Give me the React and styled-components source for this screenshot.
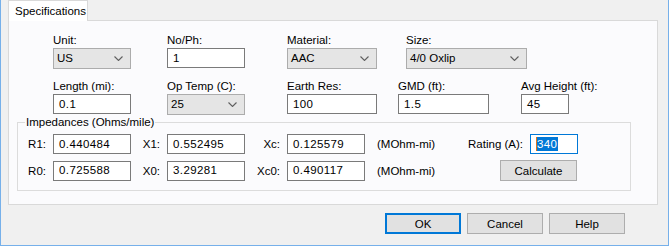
import React from "react";
import styled, { createGlobalStyle } from "styled-components";

const GlobalStyle = createGlobalStyle`
  html, body {
    margin: 0;
    padding: 0;
    background: #f0f0f0;
  }
  body {
    font-family: "Liberation Sans", "Noto Sans", sans-serif;
    font-size: 11.5px;
    color: #000;
  }
`;

const Chevron = () => (
  <svg width="9" height="5" viewBox="0 0 9 5">
    <path d="M0.5 0.5 L4.5 4.5 L8.5 0.5" fill="none" stroke="#5f5f5f" strokeWidth="1.1" />
  </svg>
);

const Select = ({ value, width }) => (
  <Combo $w={width}>
    <span>{value}</span>
    <Chevron />
  </Combo>
);

const Field = ({ label, children }) => (
  <FieldWrap>
    <Label>{label}</Label>
    {children}
  </FieldWrap>
);

const App = () => {
  return (
    <>
      <GlobalStyle />
      <Window>
        <TabStrip>
          <Tab>Specifications</Tab>
        </TabStrip>
        <Panel>
          <Row $cols="114px 120px 119px 1fr">
            <Field label="Unit:">
              <Select value="US" width={78} />
            </Field>
            <Field label="No/Ph:">
              <TextBox $w={78}>1</TextBox>
            </Field>
            <Field label="Material:">
              <Select value="AAC" width={90} />
            </Field>
            <Field label="Size:">
              <Select value="4/0 Oxlip" width={121} />
            </Field>
          </Row>
          <Row $cols="114px 120px 111px 123px 1fr">
            <Field label="Length (mi):">
              <TextBox $w={78}>0.1</TextBox>
            </Field>
            <Field label="Op Temp (C):">
              <Select value="25" width={78} />
            </Field>
            <Field label="Earth Res:">
              <TextBox $w={90}>100</TextBox>
            </Field>
            <Field label="GMD (ft):">
              <TextBox $w={91}>1.5</TextBox>
            </Field>
            <Field label="Avg Height (ft):">
              <TextBox $w={48}>45</TextBox>
            </Field>
          </Row>
          <Group>
            <Legend>Impedances (Ohms/mile)</Legend>
            <ImpGrid>
              <RowLabel>R1:</RowLabel>
              <TextBox $w={78}>0.440484</TextBox>
              <RowLabel>X1:</RowLabel>
              <TextBox $w={78}>0.552495</TextBox>
              <RowLabel>Xc:</RowLabel>
              <TextBox $w={78}>0.125579</TextBox>
              <Unit>(MOhm-mi)</Unit>
              <RowLabel>Rating (A):</RowLabel>
              <TextBox $w={48} $focus>
                <Caret />
                <Selected>340</Selected>
              </TextBox>

              <RowLabel>R0:</RowLabel>
              <TextBox $w={78}>0.725588</TextBox>
              <RowLabel>X0:</RowLabel>
              <TextBox $w={78}>3.29281</TextBox>
              <RowLabel>Xc0:</RowLabel>
              <TextBox $w={78}>0.490117</TextBox>
              <Unit>(MOhm-mi)</Unit>
              <CalcButton>Calculate</CalcButton>
            </ImpGrid>
          </Group>
        </Panel>
        <ButtonBar>
          <Button $default>OK</Button>
          <Button>Cancel</Button>
          <Button>Help</Button>
        </ButtonBar>
      </Window>
    </>
  );
};

const Window = styled.div`
  box-sizing: border-box;
  width: 669px;
  height: 246px;
  background: #f0f0f0;
  border-left: 1px solid #76b0ea;
  border-right: 1px solid #76b0ea;
  border-bottom: 1px solid #76b0ea;
  padding: 0 10px 0 7px;
`;

const TabStrip = styled.div`
  display: flex;
  height: 20px;
  align-items: flex-end;
`;

const Tab = styled.div`
  box-sizing: border-box;
  height: 21px;
  width: 80px;
  margin-bottom: -1px;
  padding: 3px 0 0 6px;
  background: #fff;
  border: 1px solid #d9d9d9;
  border-bottom: none;
  position: relative;
  z-index: 1;
  line-height: 15px;
  white-space: nowrap;
`;

const Panel = styled.div`
  box-sizing: border-box;
  height: 185px;
  background: #fbfbfd;
  border: 1px solid #d9d9d9;
  padding: 12px 0 0 44px;
  display: flex;
  flex-direction: column;
  gap: 10px;
`;

const Row = styled.div`
  display: grid;
  grid-template-columns: ${(p) => p.$cols};
`;

const FieldWrap = styled.div`
  display: flex;
  flex-direction: column;
`;

const Label = styled.div`
  height: 15px;
  line-height: 15px;
  white-space: nowrap;
`;

const Combo = styled.div`
  box-sizing: border-box;
  width: ${(p) => p.$w}px;
  height: 21px;
  background: #e5e5e5;
  border: 1px solid #acacac;
  display: flex;
  align-items: center;
  justify-content: space-between;
  padding: 0 7px 0 3px;
  line-height: 15px;
`;

const TextBox = styled.div`
  box-sizing: border-box;
  width: ${(p) => p.$w}px;
  height: 20px;
  background: #fff;
  border: 1px solid ${(p) => (p.$focus ? "#0078d7" : "#7a7a7a")};
  display: flex;
  align-items: center;
  padding-left: 5px;
  line-height: 15px;
  white-space: nowrap;
  letter-spacing: 0.4px;
`;

const Caret = styled.span`
  width: 1px;
  height: 14px;
  background: #e0741a;
`;

const Selected = styled.span`
  background: #0078d7;
  color: #fff;
  padding-right: 1px;
  line-height: 14px;
`;

const Group = styled.fieldset`
  margin: -10px 26px 0 -36px;
  border: 1px solid #dcdcdc;
  padding: 4px 0 9px 0;
  min-width: 0;
`;

const Legend = styled.legend`
  margin-left: 7px;
  padding: 0 1px;
  line-height: 15px;
`;

const ImpGrid = styled.div`
  display: grid;
  grid-template-columns: 35px 78px 36px 78px 42px 78px 96px 69px 48px;
  grid-template-rows: 20px 21px;
  row-gap: 6px;
  align-items: center;
`;

const RowLabel = styled.div`
  text-align: right;
  padding-right: 7px;
  white-space: nowrap;
`;

const Unit = styled.div`
  padding-left: 12px;
  white-space: nowrap;
`;

const CalcButton = styled.button`
  grid-column: 8 / span 2;
  justify-self: end;
  box-sizing: border-box;
  width: 77px;
  height: 21px;
  margin-right: 1px;
  background: #e1e1e1;
  border: 1px solid #adadad;
  font: inherit;
  color: #000;
  padding: 0;
`;

const ButtonBar = styled.div`
  display: flex;
  justify-content: flex-end;
  gap: 6px;
  padding: 8px 33px 0 0;
`;

const Button = styled.button`
  box-sizing: border-box;
  width: 76px;
  height: 21px;
  background: #e1e1e1;
  border: ${(p) => (p.$default ? "2px solid #0078d7" : "1px solid #adadad")};
  font: inherit;
  color: #000;
  padding: 0;
`;

export default App;
